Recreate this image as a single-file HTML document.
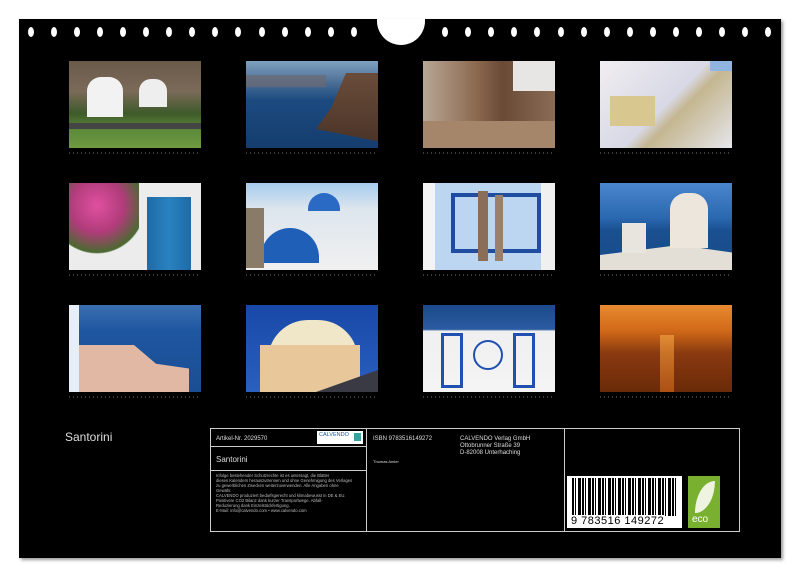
<!DOCTYPE html>
<html><head><meta charset="utf-8"><style>
*{margin:0;padding:0;box-sizing:border-box}
body{width:800px;height:577px;background:#fff;position:relative;overflow:hidden;font-family:"Liberation Sans",sans-serif}
#pg{position:absolute;left:19px;top:19px;width:762px;height:539px;background:#000;box-shadow:2px 2px 3px #999}
.h{position:absolute;top:27px;width:6px;height:10px;border-radius:50%;background:#fff}
.p{position:absolute;width:132px;height:87px;overflow:hidden}
.c{position:absolute;height:2px;width:132px;background:repeating-linear-gradient(90deg,#555 0 1px,transparent 1px 4px);opacity:.7}
.bx{position:absolute;border:1px solid #ccc}
.t{position:absolute;color:#ddd;font-size:6px;white-space:nowrap}
</style></head><body>
<div id="pg"></div>
<div style="position:absolute;left:377px;top:19px;width:48px;height:26px;background:#fff;border-radius:0 0 24px 24px"></div>
<div id="holes"></div>
<script>
var s='';for(var i=0;i<15;i++){s+='<div class="h" style="left:'+(27.5+i*23.1)+'px"></div>';s+='<div class="h" style="left:'+(442+i*23.1)+'px"></div>';}
document.getElementById('holes').innerHTML=s;
</script>

<!-- row 1 -->
<div class="p" style="left:69px;top:61px;background:linear-gradient(#6a5a4a 0,#7b6a58 35%,#3e5a2a 60%,#5d8a3a 80%,#6e9a40)">
 <div style="position:absolute;left:18px;top:16px;width:36px;height:40px;background:#f2f2f2;border-radius:14px 14px 0 0"></div>
 <div style="position:absolute;left:70px;top:18px;width:28px;height:28px;background:#eee;border-radius:12px 12px 0 0"></div>
 <div style="position:absolute;left:0;top:62px;width:132px;height:6px;background:#444"></div>
</div>
<div class="p" style="left:246px;top:61px;background:linear-gradient(#7fa0c0,#4a6e95 25%,#1c4a80 45%,#153d6e)">
 <div style="position:absolute;left:40px;top:12px;width:100px;height:70px;background:linear-gradient(#6a4c3a,#4a3428);clip-path:polygon(60% 0,100% 0,100% 100%,30% 80%,45% 50%)"></div>
 <div style="position:absolute;left:0;top:14px;width:80px;height:12px;background:#6c6a70;opacity:.7"></div>
</div>
<div class="p" style="left:423px;top:61px;background:linear-gradient(90deg,#b8a696,#8c6a50 40%,#6a4a36 60%,#8a6c55)">
 <div style="position:absolute;left:0;top:60px;width:132px;height:27px;background:#a5866a"></div>
 <div style="position:absolute;left:90px;top:0;width:42px;height:30px;background:#e8e6e4"></div>
</div>
<div class="p" style="left:600px;top:61px;background:linear-gradient(135deg,#f0eef0,#d8d8e6 50%,#c4b690 60%,#e6e6ec)">
 <div style="position:absolute;left:110px;top:0;width:22px;height:10px;background:#8fb4e0"></div>
 <div style="position:absolute;left:10px;top:35px;width:45px;height:30px;background:#d8c890"></div>
</div>
<!-- row 2 -->
<div class="p" style="left:69px;top:183px;background:#ececec">
 <div style="position:absolute;left:0;top:0;width:70px;height:75px;background:radial-gradient(circle at 40% 30%,#e050a0,#b03c7a 40%,#4a6a30 70%,transparent 72%)"></div>
 <div style="position:absolute;left:78px;top:14px;width:44px;height:73px;background:linear-gradient(90deg,#1e6aa8,#2a82c0,#1e6aa8)"></div>
</div>
<div class="p" style="left:246px;top:183px;background:linear-gradient(#a6cbee,#dde6ee 30%,#f0f0f0)">
 <div style="position:absolute;left:15px;top:45px;width:58px;height:35px;background:#1f5fb8;border-radius:29px 29px 0 0"></div>
 <div style="position:absolute;left:62px;top:10px;width:32px;height:18px;background:#2a6ac4;border-radius:16px 16px 0 0"></div>
 <div style="position:absolute;left:0;top:25px;width:18px;height:60px;background:#8a7a68"></div>
</div>
<div class="p" style="left:423px;top:183px;background:#bcd6f2">
 <div style="position:absolute;left:0;top:0;width:12px;height:87px;background:#f4f4f4"></div>
 <div style="position:absolute;left:118px;top:0;width:14px;height:87px;background:#f0f0f0"></div>
 <div style="position:absolute;left:28px;top:10px;width:90px;height:60px;border:4px solid #1f4ea0"></div>
 <div style="position:absolute;left:55px;top:8px;width:10px;height:70px;background:#8a6e58"></div>
 <div style="position:absolute;left:72px;top:12px;width:8px;height:66px;background:#9a8068"></div>
</div>
<div class="p" style="left:600px;top:183px;background:linear-gradient(#4a86cc,#2a68b0 40%,#1a4f90 55%,#184c8a)">
 <div style="position:absolute;left:0;top:62px;width:132px;height:25px;background:#e4dfd6;clip-path:polygon(0 40%,60% 0,100% 30%,100% 100%,0 100%)"></div>
 <div style="position:absolute;left:70px;top:10px;width:38px;height:55px;background:#ece6dc;border-radius:16px 16px 0 0"></div>
 <div style="position:absolute;left:22px;top:40px;width:24px;height:30px;background:#e8e4de"></div>
</div>
<!-- row 3 -->
<div class="p" style="left:69px;top:305px;background:linear-gradient(#3a70b0,#1f56a0 30%,#1a4e94)">
 <div style="position:absolute;left:0;top:0;width:10px;height:87px;background:#e6eef8"></div>
 <div style="position:absolute;left:10px;top:40px;width:110px;height:47px;background:#e0b8a4;clip-path:polygon(0 0,50% 0,70% 40%,100% 50%,100% 100%,0 100%)"></div>
</div>
<div class="p" style="left:246px;top:305px;background:linear-gradient(#1848a8,#2a60c0)">
 <div style="position:absolute;left:22px;top:15px;width:90px;height:40px;background:#f0e6c8;border-radius:45px 45px 0 0"></div>
 <div style="position:absolute;left:14px;top:40px;width:100px;height:47px;background:#e8c89a"></div>
 <div style="position:absolute;left:70px;top:65px;width:62px;height:22px;background:#3a3a44;clip-path:polygon(100% 0,100% 100%,0 100%)"></div>
</div>
<div class="p" style="left:423px;top:305px;background:linear-gradient(#1c4a8a 0,#2a5aa0 28%,#f0f0f0 30%,#f4f4f4)">
 <div style="position:absolute;left:18px;top:28px;width:22px;height:55px;border:3px solid #2050b0"></div>
 <div style="position:absolute;left:90px;top:28px;width:22px;height:55px;border:3px solid #2050b0"></div>
 <div style="position:absolute;left:50px;top:35px;width:30px;height:30px;border-radius:50%;border:2px solid #2050b0"></div>
</div>
<div class="p" style="left:600px;top:305px;background:linear-gradient(#e88a30,#d06818 30%,#8a3a10 55%,#6a2a08)">
 <div style="position:absolute;left:60px;top:30px;width:14px;height:57px;background:linear-gradient(#f0a040,#c86018);opacity:.7"></div>
</div>

<div class="c" style="left:69px;top:152px"></div><div class="c" style="left:246px;top:152px"></div><div class="c" style="left:423px;top:152px"></div><div class="c" style="left:600px;top:152px"></div>
<div class="c" style="left:69px;top:274px"></div><div class="c" style="left:246px;top:274px"></div><div class="c" style="left:423px;top:274px"></div><div class="c" style="left:600px;top:274px"></div>
<div class="c" style="left:69px;top:396px"></div><div class="c" style="left:246px;top:396px"></div><div class="c" style="left:423px;top:396px"></div><div class="c" style="left:600px;top:396px"></div>

<div style="position:absolute;left:65px;top:430px;color:#ddd;font-size:12px">Santorini</div>

<div class="bx" style="left:210px;top:428px;width:530px;height:104px"></div>
<div style="position:absolute;left:366px;top:428px;width:1px;height:104px;background:#ccc"></div>
<div style="position:absolute;left:564px;top:428px;width:1px;height:104px;background:#ccc"></div>
<div style="position:absolute;left:210px;top:446px;width:156px;height:1px;background:#ccc"></div>
<div style="position:absolute;left:210px;top:470px;width:156px;height:1px;background:#ccc"></div>
<div class="t" style="left:216px;top:436px">Artikel-Nr. 2029570</div>
<div style="position:absolute;left:317px;top:431px;width:46px;height:13px;background:#fff;color:#1a5aa0;font-size:5.5px;padding:1px 2px;overflow:hidden;white-space:nowrap">CALVENDO<div style="position:absolute;right:2px;top:2px;width:7px;height:8px;background:#3aa0a0"></div></div>
<div class="t" style="left:216px;top:455px;font-size:8px">Santorini</div>
<div class="t" style="left:216px;top:473px;font-size:4.2px;line-height:5px;color:#bbb">Infolge bestehender Schutzrechte ist es untersagt, die Blätter<br>dieses Kalenders herauszutrennen und ohne Genehmigung des Verlages<br>zu gewerblichen Zwecken weiterzuverwenden. Alle Angaben ohne<br>Gewähr.<br>CALVENDO produziert bedarfsgerecht und klimabewusst in DE &amp; EU.<br>Positivere CO2 Bilanz dank kurzer Transportwege. Abfall-<br>Reduzierung dank Einzelstückfertigung.<br>E-Mail: info@calvendo.com • www.calvendo.com</div>
<div class="t" style="left:373px;top:436px">ISBN 9783516149272</div>
<div class="t" style="left:460px;top:436px;line-height:7px">CALVENDO Verlag GmbH<br>Ottobrunner Straße 39<br>D-82008 Unterhaching</div>
<div class="t" style="left:373px;top:459px;font-size:4px">Thomas Amler</div>
<div style="position:absolute;left:567px;top:476px;width:115px;height:52px;background:#fff">
 <div style="position:absolute;left:5px;top:2px;width:104px;height:38px;background:repeating-linear-gradient(90deg,#000 0 2px,#fff 2px 3px,#000 3px 4px,#fff 4px 6px,#000 6px 9px,#fff 9px 10px)"></div>
 <div style="position:absolute;left:4px;top:39px;font-size:11px;color:#000;letter-spacing:.5px;background:#fff">9 783516 149272</div>
</div>
<div style="position:absolute;left:688px;top:476px;width:32px;height:52px;background:#7ab030">
 <div style="position:absolute;left:7px;top:5px;width:20px;height:32px;background:#eef4e0;border-radius:100% 0 100% 0"></div>
 <div style="position:absolute;left:4px;top:38px;color:#fff;font-size:10px">eco</div>
</div>
</body></html>
